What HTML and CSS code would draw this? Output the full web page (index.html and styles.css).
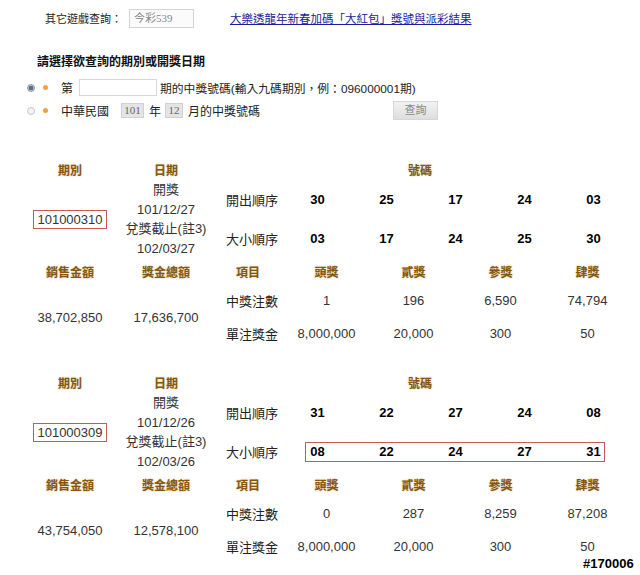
FILE: index.html
```html
<!DOCTYPE html>
<html lang="zh-Hant">
<head>
<meta charset="utf-8">
<title>今彩539 開獎結果</title>
<link rel="stylesheet" href="styles.css">
</head>
<body>
<div class="page">
  <div class="topbar">
    <span class="lbl">其它遊戲查詢：</span>
    <span class="sel">今彩539</span>
    <a class="news" href="#">大樂透龍年新春加碼「大紅包」獎號與派彩結果</a>
  </div>
  <div class="heading">請選擇欲查詢的期別或開獎日期</div>
  <div class="opt">
    <span class="radio on"></span><span class="dot"></span>
    <span>第</span><span class="field"></span><span class="after">期的中獎號碼(輸入九碼期別，例：096000001期)</span>
  </div>
  <div class="opt">
    <span class="radio"></span><span class="dot"></span>
    <span class="roc">中華民國</span><span class="mini w23">101</span><span class="unit">年</span><span class="mini w18">12</span><span class="unit">月的中獎號碼</span>
    <span class="btn">查詢</span>
  </div>

  <section class="block">
    <div class="hd">期別</div>
    <div class="hd">日期</div>
    <div class="hd">號碼</div>
    <div class="issue"><span class="idbox">101000310</span></div>
    <div class="dates"><div>開獎</div><div>101/12/27</div><div>兌獎截止(註3)</div><div>102/03/27</div></div>
    <div class="draws">
      <div class="nrow"><span class="lab">開出順序</span><b>30</b><b>25</b><b>17</b><b>24</b><b>03</b></div>
      <div class="nrow"><span class="lab">大小順序</span><b>03</b><b>17</b><b>24</b><b>25</b><b>30</b></div>
    </div>
    <div class="hd">銷售金額</div>
    <div class="hd">獎金總額</div>
    <div class="prow phd"><span class="hd">項目</span><span class="hd">頭獎</span><span class="hd">貳獎</span><span class="hd">參獎</span><span class="hd">肆獎</span></div>
    <div class="val">38,702,850</div>
    <div class="val">17,636,700</div>
    <div class="prizes">
      <div class="prow"><span class="lab">中獎注數</span><span>1</span><span>196</span><span>6,590</span><span>74,794</span></div>
      <div class="prow"><span class="lab">單注獎金</span><span>8,000,000</span><span>20,000</span><span>300</span><span>50</span></div>
    </div>
  </section>

  <section class="block second">
    <div class="hd">期別</div>
    <div class="hd">日期</div>
    <div class="hd">號碼</div>
    <div class="issue"><span class="idbox">101000309</span></div>
    <div class="dates"><div>開獎</div><div>101/12/26</div><div>兌獎截止(註3)</div><div>102/03/26</div></div>
    <div class="draws">
      <div class="nrow"><span class="lab">開出順序</span><b>31</b><b>22</b><b>27</b><b>24</b><b>08</b></div>
      <div class="nrow hl"><span class="lab">大小順序</span><b>08</b><b>22</b><b>24</b><b>27</b><b>31</b></div>
    </div>
    <div class="hd">銷售金額</div>
    <div class="hd">獎金總額</div>
    <div class="prow phd"><span class="hd">項目</span><span class="hd">頭獎</span><span class="hd">貳獎</span><span class="hd">參獎</span><span class="hd">肆獎</span></div>
    <div class="val">43,754,050</div>
    <div class="val">12,578,100</div>
    <div class="prizes">
      <div class="prow"><span class="lab">中獎注數</span><span>0</span><span>287</span><span>8,259</span><span>87,208</span></div>
      <div class="prow"><span class="lab">單注獎金</span><span>8,000,000</span><span>20,000</span><span>300</span><span>50</span></div>
    </div>
  </section>
</div>
<div class="mark">#170006</div>
</body>
</html>
```

FILE: styles.css
```css
html, body {
  margin: 0;
  padding: 0;
  background: #fff;
}
body {
  font-family: "Liberation Sans", "Noto Sans CJK TC", sans-serif;
  font-size: 12px;
  color: #222;
  width: 640px;
  height: 575px;
  position: relative;
  overflow: hidden;
}
.page {
  padding-top: 8px;
}
.topbar {
  display: flex;
  align-items: center;
  height: 20px;
  padding-left: 45px;
}
.lbl {
  color: #222;
  font-size: 11px;
}
.sel {
  box-sizing: border-box;
  width: 65px;
  height: 19px;
  margin-left: 7px;
  border: 1px solid #d4d4d4;
  background: #fbfbfb;
  color: #888;
  font-family: "Liberation Serif", "Noto Sans CJK TC", serif;
  font-size: 11px;
  line-height: 17px;
  padding-left: 4px;
}
.news {
  margin-left: 36px;
  font-size: 11.5px;
  color: #1c1c9a;
  text-decoration: underline;
}
.heading {
  margin-top: 26px;
  padding-left: 37px;
  font-weight: bold;
  line-height: 16px;
  color: #111;
}
.opt {
  display: flex;
  align-items: center;
  height: 23px;
}
.heading + .opt {
  margin-top: 6px;
}
.radio {
  box-sizing: border-box;
  width: 8px;
  height: 8px;
  margin-left: 27px;
  border-radius: 50%;
  border: 1px solid #c8c8c8;
  background: #f2f2f2;
}
.radio.on {
  border-color: #8a9aa8;
  background: radial-gradient(circle, #5c6c7a 0 2px, #b8c4cc 2.5px);
}
.dot {
  width: 5px;
  height: 5px;
  margin-left: 8px;
  margin-right: 13px;
  border-radius: 50%;
  background: #f2a23c;
}
.field {
  box-sizing: border-box;
  width: 78px;
  height: 17px;
  margin-left: 6px;
  margin-right: 3px;
  border: 1px solid #d8d8d8;
  background: #fff;
}
.after {
  font-size: 11.8px;
}
.roc {
  margin-right: 12px;
}
.mini {
  box-sizing: border-box;
  height: 15px;
  background: #e4e4e4;
  border: 1px solid #d0d0d0;
  color: #666;
  font-family: "Liberation Serif", serif;
  font-size: 11px;
  line-height: 13px;
  text-align: center;
}
.w23 { width: 23px; }
.w18 { width: 18px; }
.unit {
  margin: 0 4px 0 5px;
}
.btn {
  box-sizing: border-box;
  width: 45px;
  height: 19px;
  margin-left: 129px;
  border: 1px solid #d6d6d6;
  background: linear-gradient(#f2f2f2, #dedede);
  color: #888;
  font-size: 11px;
  line-height: 17px;
  text-align: center;
}

/* result blocks */
.block {
  display: grid;
  grid-template-columns: 104px 88px 420px;
  grid-template-rows: 22px 78px 26px 66px;
  margin-left: 18px;
  margin-top: 36px;
  font-size: 13px;
}
.block.second {
  margin-top: 21px;
}
.hd {
  display: flex;
  align-items: center;
  justify-content: center;
  font-size: 12px;
  font-weight: bold;
  color: #86560a;
  text-shadow: 0 0 2px rgba(190, 170, 130, 0.7);
}
.issue {
  display: flex;
  align-items: center;
  justify-content: center;
}
.idbox {
  box-sizing: border-box;
  height: 19px;
  padding: 0 3px;
  border: 1px solid #c85a5a;
  line-height: 17px;
  color: #333;
}
.dates {
  display: flex;
  flex-direction: column;
  align-items: center;
  color: #333;
}
.dates div {
  line-height: 19.5px;
}
.draws, .prizes {
  display: flex;
  flex-direction: column;
}
.nrow {
  display: grid;
  grid-template-columns: 73px repeat(5, 69px);
  align-items: center;
  height: 39px;
  position: relative;
}
.nrow b {
  text-align: center;
  color: #000;
}
.lab {
  padding-left: 16px;
  color: #222;
}
.hl::after {
  content: "";
  position: absolute;
  left: 95px;
  width: 300px;
  top: calc(50% - 10px);
  height: 20px;
  box-sizing: border-box;
  border: 1px solid #c85a5a;
}
.prow {
  display: grid;
  grid-template-columns: 73px repeat(4, 87px);
  align-items: center;
  height: 33px;
  color: #333;
}
.prow span {
  text-align: center;
}
.prow span.lab {
  text-align: left;
  color: #222;
}
.phd {
  height: 26px;
}
.phd .hd:first-child {
  padding-left: 3px;
}
.val {
  display: flex;
  align-items: center;
  justify-content: center;
  color: #333;
}
.mark {
  position: absolute;
  left: 583px;
  top: 556px;
  font-size: 13px;
  font-weight: bold;
  color: #000;
  text-shadow: -1px 0 #fff, 1px 0 #fff, 0 -1px #fff, 0 1px #fff, 0 0 2px #fff;
}
```
